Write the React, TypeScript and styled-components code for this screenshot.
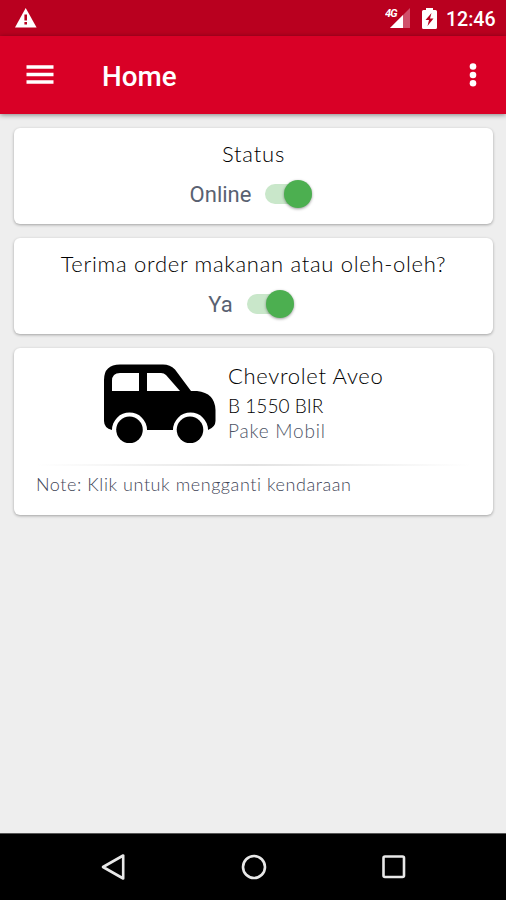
import React from "react";
import styled, { createGlobalStyle } from "styled-components";

const GlobalStyle = createGlobalStyle`
  *, *::before, *::after { box-sizing: border-box; }
  body { margin: 0; background: #eee; }
`;

const Screen = styled.div`
  display: flex;
  flex-direction: column;
  width: 506px;
  height: 900px;
  overflow: hidden;
  background: #eee;
  font-family: Lato, "Open Sans", sans-serif;
`;

const StatusBar = styled.header`
  display: flex;
  align-items: center;
  flex: 0 0 36px;
  height: 36px;
  padding: 0 11px 0 15px;
  background: #b9001f;
  color: #fff;
`;

const StatusIcons = styled.div`
  display: flex;
  align-items: center;
  gap: 11px;
  margin-left: auto;
`;

const Clock = styled.time`
  width: 49px;
  margin-left: -2px;
  padding-top: 4px;
  font: 500 19.6px/32px Roboto, sans-serif;
  letter-spacing: -0.05px;
  white-space: nowrap;
`;

const AppBar = styled.nav`
  display: flex;
  align-items: center;
  flex: 0 0 78px;
  z-index: 1;
  padding: 0 27px 0 26px;
  background: #d90026;
  box-shadow: 0 1px 5px rgba(0, 0, 0, 0.45);
`;

const IconButton = styled.button`
  display: flex;
  padding: 0;
  border: 0;
  background: none;
`;

const Title = styled.h1`
  flex: 1;
  margin: 0 0 0 48px;
  padding-top: 3px;
  color: #fff;
  font: 500 27.8px/36px Roboto, sans-serif;
`;

const Content = styled.main`
  display: flex;
  flex: 1;
  flex-direction: column;
  gap: 14px;
  padding: 14px 13px 0 14px;
`;

const Card = styled.section<{ $height: number }>`
  height: ${(p) => p.$height}px;
  border-radius: 6px;
  background: #fff;
  box-shadow: 0 1px 3px rgba(0, 0, 0, 0.32);
`;

const Question = styled.h2<{ $spacing: number }>`
  margin: 0;
  padding-top: 10px;
  color: #000;
  font-size: 22px;
  font-weight: 300;
  line-height: 32px;
  letter-spacing: ${(p) => p.$spacing}px;
  text-align: center;
  white-space: nowrap;
`;

const ToggleRow = styled.label`
  display: flex;
  align-items: center;
  justify-content: center;
  gap: 14px;
  height: 34px;
  margin-top: 8px;
  padding-right: 5px;
  color: #596171;
  font: 400 22px/32px Roboto, sans-serif;
`;

const Track = styled.span`
  display: flex;
  align-items: center;
  justify-content: flex-end;
  width: 47px;
  height: 20px;
  margin-bottom: 2px;
  border-radius: 10px;
  background: #c9e7ca;
`;

const Thumb = styled.span`
  width: 28px;
  height: 28px;
  border-radius: 50%;
  background: #4caf50;
  box-shadow: 0 1px 3px rgba(0, 0, 0, 0.4);
`;

const Vehicle = styled.div`
  display: flex;
  gap: 11px;
  height: 116px;
  padding: 16px 0 0 89px;
`;

const VehicleInfo = styled.div`
  display: flex;
  flex-direction: column;
  white-space: nowrap;
`;

const VehicleName = styled.h2`
  margin: -4px 0 0;
  color: #000;
  font-size: 22px;
  font-weight: 300;
  line-height: 32px;
  letter-spacing: 0.68px;
`;

const Plate = styled.span`
  margin-top: 1px;
  color: #000;
  font-size: 19px;
  font-weight: 300;
  line-height: 26px;
  letter-spacing: 0.05px;
`;

const Service = styled.span`
  color: #4d5466;
  font-size: 19px;
  font-weight: 300;
  line-height: 24px;
  letter-spacing: 0.8px;
`;

const Divider = styled.hr`
  height: 2px;
  margin: 0 22px;
  border: 0;
  background: linear-gradient(90deg, #fff, #e3e3e3 50%, #fff);
`;

const Note = styled.p`
  margin: 0;
  padding: 6px 22px;
  color: #3f4658;
  font-size: 18px;
  font-weight: 300;
  line-height: 24px;
  letter-spacing: 0.57px;
  white-space: nowrap;
`;

const NavBar = styled.footer`
  display: flex;
  align-items: center;
  justify-content: space-between;
  flex: 0 0 67px;
  padding: 0 99px 0 100px;
  border-top: 1px solid #555;
  background: #000;
`;

const Drawing = styled.svg`
  display: block;
  flex: none;
`;

const NetworkLabel = styled.text`
  font: italic 700 11px Roboto, sans-serif;
  letter-spacing: -0.8px;
`;

const Toggle = () => (
  <Track role="switch" aria-checked="true">
    <Thumb />
  </Track>
);

export default function App() {
  return (
    <>
      <GlobalStyle />
      <Screen>
        <StatusBar>
          <Drawing width="22" height="20" viewBox="0 0 22 20">
            <path d="M10.7 0 21.6 19.5H0Z" fill="#fff" />
            <path d="M9.4 6.5h2.6v6H9.4zM9.4 14h2.6v2.6H9.4z" fill="#b9001f" />
          </Drawing>
          <StatusIcons>
            <Drawing width="26" height="21" viewBox="0 0 26 21">
              <path d="M25 0v20H5Z" fill="#d0506b" />
              <path d="M18 7V20H5Z" fill="#fff" />
              <NetworkLabel x="0" y="9" fill="#fff">4G</NetworkLabel>
            </Drawing>
            <Drawing width="15" height="21" viewBox="0 0 15 21">
              <path d="M4 0h7v2h2.5Q15 2 15 3.5v16Q15 21 13.5 21h-12Q0 21 0 19.5v-16Q0 2 1.5 2H4Z" fill="#fff" />
              <path d="M9.5 5 3.5 12H7l-1.5 6 6-7.5H8Z" fill="#b9001f" />
            </Drawing>
            <Clock>12:46</Clock>
          </StatusIcons>
        </StatusBar>
        <AppBar>
          <IconButton aria-label="Menu">
            <Drawing width="28" height="20" viewBox="0 0 28 20">
              <path d="M.5 2h27M.5 9.5h27M.5 17h27" stroke="#fff" strokeWidth="3.4" />
            </Drawing>
          </IconButton>
          <Title>Home</Title>
          <IconButton aria-label="More options">
            <Drawing width="12" height="24" viewBox="0 0 12 24" fill="#fff">
              <circle cx="6" cy="3.5" r="3.3" />
              <circle cx="6" cy="12" r="3.3" />
              <circle cx="6" cy="20.3" r="3.3" />
            </Drawing>
          </IconButton>
        </AppBar>
        <Content>
          <Card $height={96}>
            <Question $spacing={0.8}>Status</Question>
            <ToggleRow>
              Online
              <Toggle />
            </ToggleRow>
          </Card>
          <Card $height={96}>
            <Question $spacing={0.7}>Terima order makanan atau oleh-oleh?</Question>
            <ToggleRow>
              Ya
              <Toggle />
            </ToggleRow>
          </Card>
          <Card $height={167}>
            <Vehicle>
              <Drawing width="114" height="80" viewBox="0 0 114 80">
                <path
                  fillRule="evenodd"
                  d="M17 .5H60Q67 .5 72 5.5L88 27H94Q112 29 112.5 46V57Q112.5 63 105 66A17.5 17.5 0 0 0 70 66H44A17.5 17.5 0 0 0 9 66Q1 64 1 57V16Q1 .5 17 .5ZM17 9Q9 9 9 17V27H36V9ZM44 9V27H77L63 11Q61 9 58 9Z"
                />
                <circle cx="26.5" cy="65.8" r="13.3" />
                <circle cx="87" cy="65.8" r="13.3" />
              </Drawing>
              <VehicleInfo>
                <VehicleName>Chevrolet Aveo</VehicleName>
                <Plate>B 1550 BIR</Plate>
                <Service>Pake Mobil</Service>
              </VehicleInfo>
            </Vehicle>
            <Divider />
            <Note>Note: Klik untuk mengganti kendaraan</Note>
          </Card>
        </Content>
        <NavBar>
          <Drawing width="26" height="28" viewBox="0 0 26 28" fill="none" stroke="#e8e8e8" strokeWidth="2.6">
            <path d="M23.2 2.5v23L3 14Z" strokeLinejoin="round" />
          </Drawing>
          <Drawing width="26" height="26" viewBox="0 0 26 26" fill="none" stroke="#e8e8e8" strokeWidth="2.6">
            <circle cx="13" cy="13" r="11" />
          </Drawing>
          <Drawing width="26" height="26" viewBox="0 0 26 26" fill="none" stroke="#e8e8e8" strokeWidth="2.6">
            <rect x="2.5" y="2.5" width="20.5" height="20.5" rx="1.5" />
          </Drawing>
        </NavBar>
      </Screen>
    </>
  );
}
